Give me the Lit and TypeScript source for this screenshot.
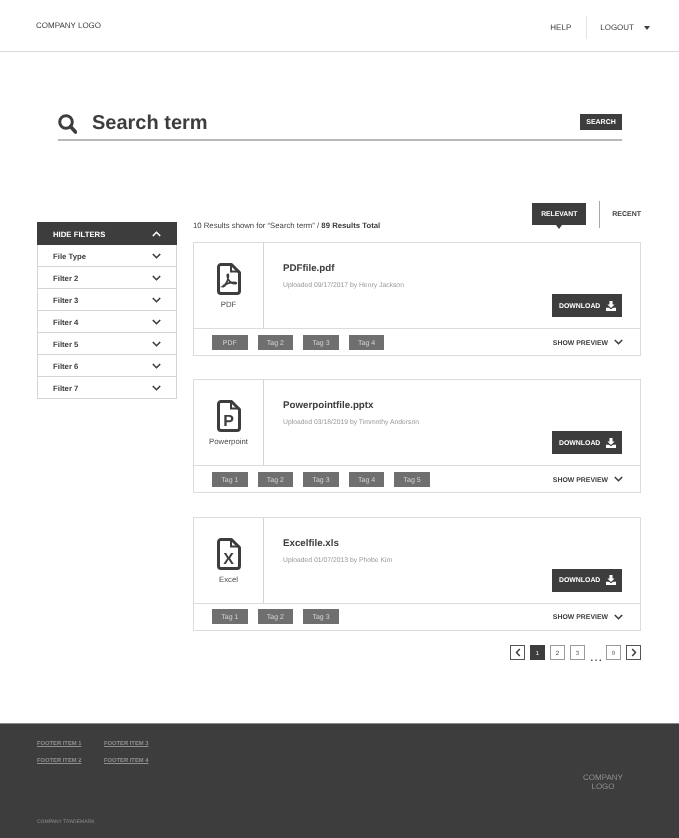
import { LitElement, html, css, svg } from "lit";
import { customElement } from "lit/decorators.js";

const chevDown = html`<svg class="chev" width="9" height="6" viewBox="0 0 9 6"><path d="M.8 1 4.500 4.700 8.200 1" fill="none" stroke="#3d3d3d" stroke-width="1.600"/></svg>`;
const chevUp = html`<svg class="chev" width="9" height="6" viewBox="0 0 9 6"><path d="M.8 5 4.500 1.300 8.200 5" fill="none" stroke="#fff" stroke-width="1.600"/></svg>`;
const dlIcon = html`<svg width="10" height="10" viewBox="0 0 11 11"><path d="M3.800 0h3.400v3.800h2.300L5.500 7.600 1.500 3.800h2.300z" fill="#fff"/><path d="M0 7.400h3.200l2.300 1.600 2.300-1.600H11V11H0z" fill="#fff"/></svg>`;

function fileIcon(kind: string) {
  const inner =
    kind === "pdf"
      ? svg`<path d="M6 23.500c2.500-1.500 4.600-5 5.300-9.600.2-1.600.1-2.600-.5-2.600-.8 0-.7 2.400.5 5 1.200 2.500 3.300 4.200 6.900 4.400 1.300 0 1.600-1 .4-1.200-3.700-.4-8.800.8-11.600 2.700-1.200.8-1.300 1.800-.5 1.300z" fill="none" stroke="#3d3d3d" stroke-width="1.700"/>`
      : svg`<text class="glyph" x="11.500" y="26" text-anchor="middle">${kind === "ppt" ? "P" : "X"}</text>`;
  return html`<svg class="file" width="24" height="32" viewBox="0 0 24 32">
    <path d="M4 1.500H14.500L22.500 9.500V28a2.500 2.500 0 0 1-2.500 2.500H4A2.500 2.500 0 0 1 1.500 28V4A2.500 2.500 0 0 1 4 1.500z" fill="none" stroke="#3d3d3d" stroke-width="3" stroke-linejoin="round"/>
    <path d="M14 1.500V8.500H22.500" fill="none" stroke="#3d3d3d" stroke-width="2"/>
    ${inner}
  </svg>`;
}

interface Result {
  kind: string;
  label: string;
  name: string;
  meta: string;
  tags: string[];
}

const results: Result[] = [
  { kind: "pdf", label: "PDF", name: "PDFfile.pdf", meta: "Uploaded 09/17/2017 by Henry Jackson", tags: ["PDF", "Tag 2", "Tag 3", "Tag 4"] },
  { kind: "ppt", label: "Powerpoint", name: "Powerpointfile.pptx", meta: "Uploaded 03/18/2019 by Timmothy Anderson", tags: ["Tag 1", "Tag 2", "Tag 3", "Tag 4", "Tag 5"] },
  { kind: "xls", label: "Excel", name: "Excelfile.xls", meta: "Uploaded 01/07/2013 by Phobe Kim", tags: ["Tag 1", "Tag 2", "Tag 3"] },
];

const filters = ["File Type", "Filter 2", "Filter 3", "Filter 4", "Filter 5", "Filter 6", "Filter 7"];

@customElement("app-root")
export class AppRoot extends LitElement {
  static styles = css`
    :host {
      display: block;
      width: 679px;
      height: 838px;
      overflow: hidden;
      will-change: transform;
      font-family: "Liberation Sans", Arial, sans-serif;
      text-rendering: geometricPrecision;
      color: #3d3d3d;
    }
    .header {
      height: 51px;
      border-bottom: 1px solid #d9d9d9;
      display: flex;
      justify-content: space-between;
      padding: 0 29px 0 36px;
    }
    .logo { font-size: 8px; margin-top: 21px; line-height: 10px; }
    .nav { display: flex; align-items: flex-start; font-size: 8px; margin-top: 16px; }
    .help { line-height: 23px; padding-right: 15px; border-right: 1px solid #e3e3e3; }
    .logout { line-height: 23px; padding-left: 13px; display: flex; align-items: center; gap: 10px; }
    .caret { width: 0; height: 0; border-left: 3.500px solid transparent; border-right: 3.500px solid transparent; border-top: 4px solid #3d3d3d; }

    .search {
      margin: 62px 57px 0 58px;
      height: 25px;
      border-bottom: 2px solid #b9b9b9;
      display: flex;
      align-items: flex-start;
    }
    .search svg { margin-right: 15px; flex: none; }
    .term { flex: 1; font-size: 20px; font-weight: 700; line-height: 19px; }
    .sbtn { width: 42px; height: 16px; background: #3d3d3d; color: #fff; font-size: 7px; font-weight: 700; line-height: 17px; text-align: center; }

    .main { display: flex; align-items: flex-start; margin: 60px 38px 0 37px; gap: 16px; }
    .side { width: 140px; flex: none; margin-top: 21px; box-sizing: border-box; border: 1px solid #d4d4d4; border-top: 0; }
    .side-head { margin: 0 -1px; height: 23px; box-sizing: border-box; padding: 0 16px; background: #3d3d3d; color: #fff; font-size: 7.750px; font-weight: 700; display: flex; align-items: center; justify-content: space-between; }
    .row { height: 22px; box-sizing: border-box; border-bottom: 1px solid #d4d4d4; font-size: 7.750px; font-weight: 700; display: flex; align-items: center; justify-content: space-between; padding: 0 15px; }
    .row:last-child { border-bottom: 0; height: 21px; }
    .side-head span, .row span { padding-top: 1px; }
    .content { flex: 1; min-width: 0; }
    .bar { height: 41px; display: flex; align-items: flex-start; }
    .count { flex: 1; font-size: 7.750px; line-height: 10px; margin-top: 20px; }
    .count b { font-weight: 700; }
    .tab { position: relative; width: 54px; height: 22px; margin-top: 2px; background: #3d3d3d; color: #fff; font-size: 6.800px; font-weight: 700; line-height: 24px; text-align: center; }
    .tab::after { content: ""; position: absolute; left: 24px; top: 22px; border-left: 3px solid transparent; border-right: 3px solid transparent; border-top: 4px solid #3d3d3d; }
    .sep { width: 1px; height: 27px; background: #a8a8a8; margin: 0 12px 0 13px; }
    .recent { font-size: 7px; font-weight: 700; line-height: 28px; }

    .card { box-sizing: border-box; height: 114px; border: 1px solid #dcdcdc; margin-bottom: 23.300px; display: flex; flex-direction: column; }
    .top { height: 86px; box-sizing: border-box; border-bottom: 1px solid #dcdcdc; display: flex; flex: none; }
    .type { width: 70px; box-sizing: border-box; border-right: 1px solid #d4d4d4; display: flex; flex-direction: column; align-items: center; padding-top: 20px; font-size: 7.750px; color: #4a4a4a; }
    .type span { margin-top: 5px; line-height: 10px; }
    .glyph { font: 700 16px "Liberation Sans", Arial, sans-serif; fill: #3d3d3d; }
    .info { flex: 1; padding: 20px 18px 0 19px; display: flex; flex-direction: column; }
    .name { font-size: 9.750px; font-weight: 700; line-height: 12px; }
    .meta { font-size: 6.800px; color: #999; line-height: 9px; margin-top: 6px; }
    .dl { align-self: flex-end; margin-top: 4px; width: 70px; height: 23px; box-sizing: border-box; background: #3d3d3d; color: #fff; font-size: 6.900px; font-weight: 700; display: flex; align-items: center; justify-content: space-between; padding: 0 6px 0 7px; }
    .dl span { padding-top: 1px; }
    .bottom { flex: 1; display: flex; align-items: center; padding: 0 17px 0 18px; }
    .tags { flex: 1; display: flex; gap: 10px; }
    .tag { width: 35.600px; height: 15px; background: #6f6f6f; color: #d4d4d4; font-size: 7px; line-height: 17px; text-align: center; }
    .prev { font-size: 6.900px; font-weight: 700; display: flex; align-items: center; gap: 6px; }
    .prev span { padding-top: 2px; }

    .pager { display: flex; justify-content: flex-end; align-items: flex-start; gap: 5px; margin-top: -8.900px; }
    .pg { width: 15px; height: 15px; box-sizing: border-box; border: 1px solid #9a9a9a; font-size: 6px; text-align: center; color: #555; display: flex; align-items: center; justify-content: center; }
    .pg.num { padding-top: 2px; }
    .pg.on { background: #3d3d3d; border-color: #3d3d3d; color: #fff; }
    .pg.ar { border-color: #555; }
    .dots { width: 11px; font-size: 13px; font-weight: 400; line-height: 23px; height: 15px; text-align: center; letter-spacing: 0.600px; }

    .footer { margin-top: 63px; height: 115px; box-sizing: border-box; background: #3d3d3d; border-top: 1px solid #8a8a8a; padding: 16px 37px 0; color: #8f8f8f; position: relative; display: flex; flex-direction: column; }
    .cols { display: grid; grid-template-columns: 67px auto; justify-content: start; row-gap: 8.500px; font-size: 5.800px; font-weight: 700; line-height: 8px; text-decoration: underline; }
    .flogo { position: absolute; left: 573px; top: 49px; width: 60px; text-align: center; font-size: 8px; line-height: 9px; }
    .tm { font-size: 5px; margin-top: 54px; line-height: 7px; }
  `;

  render() {
    return html`
      <header class="header">
        <div class="logo">COMPANY LOGO</div>
        <nav class="nav">
          <div class="help">HELP</div>
          <div class="logout">LOGOUT <i class="caret"></i></div>
        </nav>
      </header>
      <section class="search">
        <svg width="19" height="20" viewBox="0 0 19 20"><circle cx="8" cy="8" r="6.300" fill="none" stroke="#3d3d3d" stroke-width="3"/><path d="M12.500 12.500 17.500 18" stroke="#3d3d3d" stroke-width="3.600" stroke-linecap="round"/></svg>
        <div class="term">Search term</div>
        <div class="sbtn">SEARCH</div>
      </section>
      <main class="main">
        <aside class="side">
          <div class="side-head"><span>HIDE FILTERS</span>${chevUp}</div>
          ${filters.map((f) => html`<div class="row"><span>${f}</span>${chevDown}</div>`)}
        </aside>
        <div class="content">
          <div class="bar">
            <div class="count">10 Results shown for “Search term” / <b>89 Results Total</b></div>
            <div class="tab">RELEVANT</div>
            <div class="sep"></div>
            <div class="recent">RECENT</div>
          </div>
          ${results.map(
            (r) => html`
              <article class="card">
                <div class="top">
                  <div class="type">${fileIcon(r.kind)}<span>${r.label}</span></div>
                  <div class="info">
                    <div class="name">${r.name}</div>
                    <div class="meta">${r.meta}</div>
                    <div class="dl"><span>DOWNLOAD</span>${dlIcon}</div>
                  </div>
                </div>
                <div class="bottom">
                  <div class="tags">${r.tags.map((t) => html`<div class="tag">${t}</div>`)}</div>
                  <div class="prev"><span>SHOW PREVIEW</span>${chevDown}</div>
                </div>
              </article>
            `
          )}
          <div class="pager">
            <div class="pg ar"><svg width="6" height="9" viewBox="0 0 6 9"><path d="M4.800 1 1.500 4.500 4.800 8" fill="none" stroke="#3d3d3d" stroke-width="1.500"/></svg></div>
            <div class="pg num on">1</div>
            <div class="pg num">2</div>
            <div class="pg num">3</div>
            <div class="dots">...</div>
            <div class="pg num">9</div>
            <div class="pg ar"><svg width="6" height="9" viewBox="0 0 6 9"><path d="M1.200 1 4.500 4.500 1.200 8" fill="none" stroke="#3d3d3d" stroke-width="1.500"/></svg></div>
          </div>
        </div>
      </main>
      <footer class="footer">
        <div class="cols">
          <span>FOOTER ITEM 1</span><span>FOOTER ITEM 3</span>
          <span>FOOTER ITEM 2</span><span>FOOTER ITEM 4</span>
        </div>
        <div class="flogo">COMPANY LOGO</div>
        <div class="tm">COMPANY TRADEMARK</div>
      </footer>
    `;
  }
}
